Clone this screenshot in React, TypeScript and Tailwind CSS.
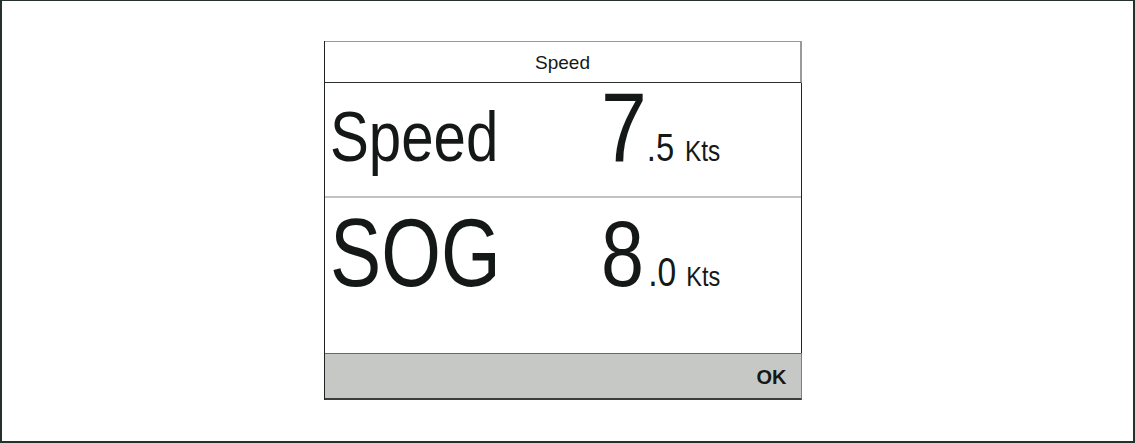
export default function App() {
  return (
    <div className="w-[1135px] h-[443px] bg-white border-t border-l-2 border-r-2 border-b-2 border-[#26302d] pl-[322px] pt-[40px] text-[#141918] font-['Liberation_Sans',Arial,sans-serif]">
      <div className="w-[478px] flex flex-col border-l border-[#1f2422]">
        {/* Title bar */}
        <div className="h-[42px] flex items-center justify-center border-t border-[#9a9a9a] border-b border-b-[#2a2e2d] border-r-2 border-r-[#9a9a9a] text-[19px] leading-none">
          Speed
        </div>

        <div className="flex flex-col border-r border-[#1f2422]">
          {/* Speed row */}
          <div className="h-[113px] grid grid-cols-[276px_1fr] items-baseline pt-[5px] leading-[0.8]">
            <span className="pl-[5px]">
              <span className="inline-block text-[71px] scale-x-[0.82] origin-left">Speed</span>
            </span>
            <span className="flex items-baseline scale-x-[0.84] origin-left">
              <span className="text-[98px]">7</span>
              <span className="text-[39px]">.5</span>
              <span className="text-[29px] ml-[13px]">Kts</span>
            </span>
          </div>

          <div className="h-[2px] bg-[#c2c2c2]" />

          {/* SOG row */}
          <div className="h-[155px] grid grid-cols-[276px_1fr] items-baseline pt-[17px] leading-[0.8]">
            <span className="pl-[5px]">
              <span className="inline-block text-[96px] scale-x-[0.8] origin-left">SOG</span>
            </span>
            <span className="flex items-baseline scale-x-[0.84] origin-left">
              <span className="text-[92px]">8</span>
              <span className="text-[40px] ml-[5px]">.0</span>
              <span className="text-[28px] ml-[12px]">Kts</span>
            </span>
          </div>
        </div>

        {/* Soft key bar */}
        <div className="h-[47px] flex items-center justify-end pr-[15px] bg-[#c6c8c6] border-t border-[#666866] border-b-2 border-b-[#3a3d3c] border-r border-r-[#7d807e] text-[21px] font-bold leading-none">
          <span className="inline-block scale-x-[0.95] origin-right">OK</span>
        </div>
      </div>
    </div>
  );
}
